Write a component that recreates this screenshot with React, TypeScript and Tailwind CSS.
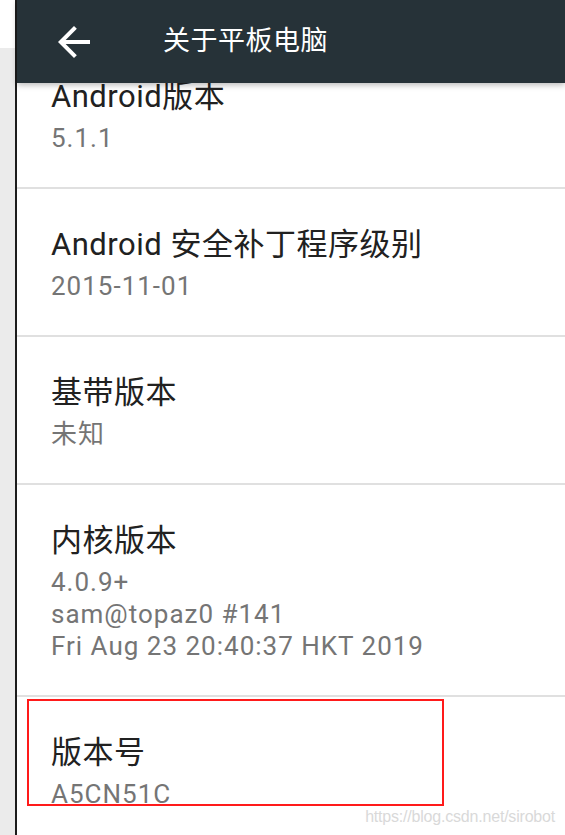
const font = { fontFamily: '"Roboto", "Noto Sans CJK SC", sans-serif' }

type Item = { title: string; lines: string[]; marked?: boolean }

const items: Item[] = [
  { title: 'Android版本', lines: ['5.1.1'] },
  { title: 'Android 安全补丁程序级别', lines: ['2015-11-01'] },
  { title: '基带版本', lines: ['未知'] },
  { title: '内核版本', lines: ['4.0.9+', 'sam@topaz0 #141', 'Fri Aug 23 20:40:37 HKT 2019'] },
  { title: '版本号', lines: ['A5CN51C'], marked: true },
]

function Row({ item, last }: { item: Item; last: boolean }) {
  return (
    <div className={`relative px-[34px] pt-[36px] pb-[33px] ${last ? '' : 'border-b-2 border-[#e0e0e0]'}`}>
      <div className="text-[31px] leading-[40px] tracking-[0.5px] text-[#212121]">{item.title}</div>
      <div className="mt-[5px] text-[26px] leading-[32px] tracking-[1px] text-[#757575]">
        {item.lines.map((l) => (
          <div key={l}>{l}</div>
        ))}
      </div>
      {item.marked && (
        <div className="absolute left-[10px] top-[2px] h-[107px] w-[417px] border-2 border-[#ff1a1a]" />
      )}
    </div>
  )
}

export default function App() {
  return (
    <div className="flex h-[835px] w-[565px] overflow-hidden bg-white" style={font}>
      <div className="flex w-[15px] flex-col">
        <div className="h-[48px] bg-white" />
        <div className="flex-1 bg-[#ebebeb]" />
      </div>
      <div className="w-[2px] bg-[#1c1c1c]" />

      <div className="relative flex-1">
        <div className="pt-[41px]">
          {items.map((it, i) => (
            <Row key={it.title} item={it} last={i === items.length - 1} />
          ))}
        </div>

        {/* toolbar sits over the scrolled list */}
        <div className="absolute left-0 right-0 top-0 z-10 flex h-[83px] items-center bg-[#263238] shadow-[0_2px_6px_rgba(0,0,0,0.28)]">
          <svg width="48" height="48" viewBox="0 0 24 24" className="ml-[33px] shrink-0" fill="#fff">
            <path d="M20 11H7.83l5.59-5.59L12 4l-8 8 8 8 1.41-1.41L7.83 13H20v-2z" />
          </svg>
          <span className="ml-[65px] text-[27px] leading-none tracking-[0.5px] text-white">关于平板电脑</span>
        </div>

        <div
          className="absolute bottom-[6px] right-[10px] text-[16px] tracking-[-0.2px] text-[#d9d9d9]"
          style={{ fontFamily: '"Liberation Sans", Arial, sans-serif' }}
        >
          https://blog.csdn.net/sirobot
        </div>
      </div>
    </div>
  )
}
